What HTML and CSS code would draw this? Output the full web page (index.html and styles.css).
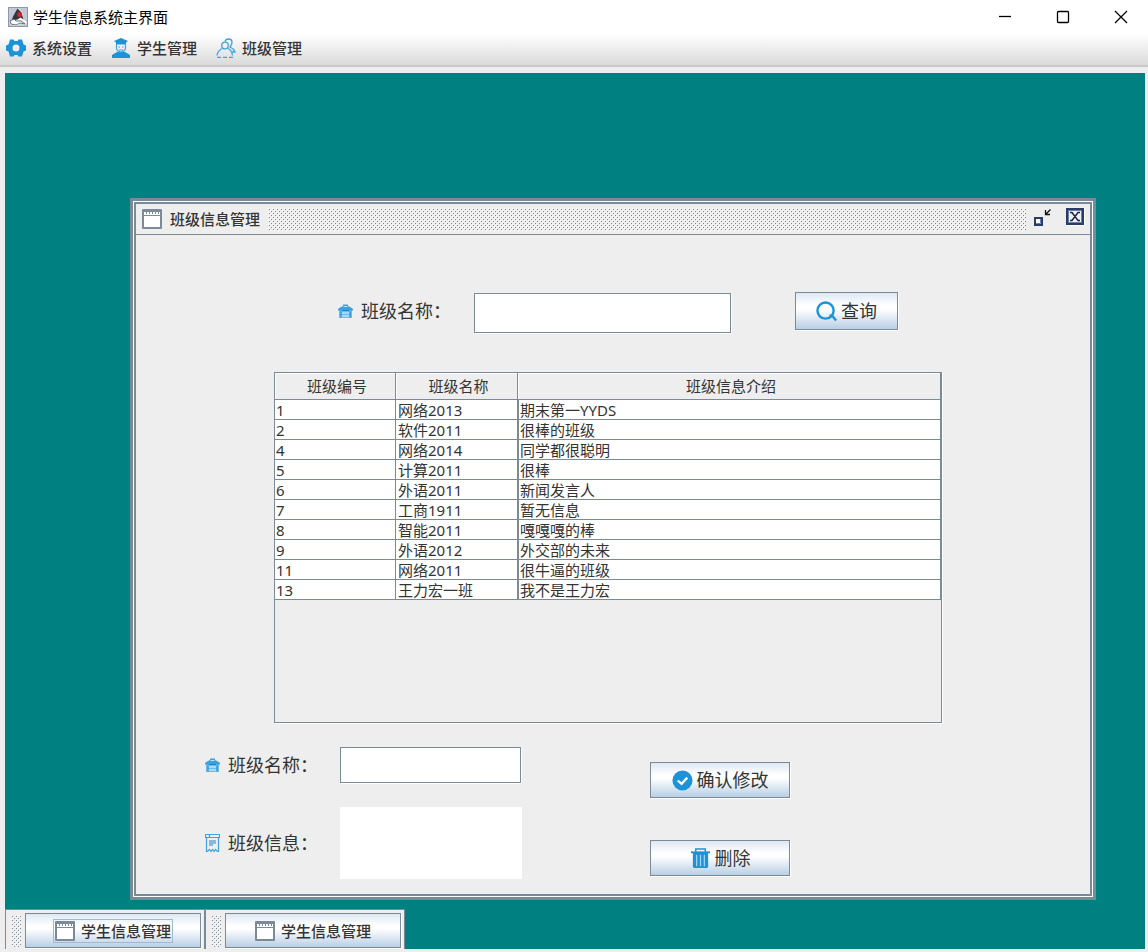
FILE: index.html
```html
<!DOCTYPE html>
<html lang="zh-CN">
<head>
<meta charset="utf-8">
<meta name="viewport" content="width=device-width, initial-scale=1">
<title>学生信息系统主界面</title>
<link rel="stylesheet" href="styles.css">
</head>
<body>
<svg class="sprite" aria-hidden="true">
  <symbol id="i-window" viewBox="0 0 20 20">
    <rect width="20" height="20" rx="1" fill="#7a8a99"/>
    <rect x="2" y="3" width="16" height="3" fill="#fff"/>
    <path d="M4.500 3v2M7.500 3v2M10.500 3v2M13.500 3v2M16.500 3v2" stroke="#7a8a99"/>
    <rect x="2" y="7" width="16" height="11" fill="#fff"/>
  </symbol>
  <symbol id="i-house" viewBox="0 0 15 14">
    <path d="M1 5h13v9H1z" fill="#6bbcec"/>
    <path d="M0 5l2-1.500L5 2V0.500h5V2l3 1.500L15 5v1.500H0z" fill="#3ba0dc"/>
    <path d="M3.500 9h8M3.500 12h8" stroke="#e6f4fc"/>
    <path d="M4 6.500h7M3 7.500v6M12 7.500v6" stroke="#1f86c9"/>
    <path d="M5.500 2.500h4" stroke="#bfe1f6"/>
  </symbol>
</svg>

<header class="titlebar">
  <svg class="app-icon" viewBox="0 0 20 20" aria-hidden="true">
    <rect x=".5" y=".5" width="19" height="19" fill="#c2c9d4" stroke="#8d99aa"/>
    <path d="M10 1l4 4 1.500 7 3.500 3-2 3-4-1-5 2-5-1-2-3 4-2 1-4z" fill="#f5f5f5"/>
    <path d="M9.500 1.500l4 4 2 7-3-2-3 2-6 1 2-5z" fill="#34363d"/>
    <path d="M2 14l4-2 2 2h5l4 3-5-1-4 2-5-1z" fill="#fff" stroke="#4b4f59" stroke-width=".8"/>
    <circle cx="11.500" cy="7.500" r="2.500" fill="#d0242c"/>
  </svg>
  <h1 class="app-title">学生信息系统主界面</h1>
  <div class="window-controls">
    <button type="button" aria-label="最小化"><svg viewBox="0 0 14 14"><path d="M1 6.500h12"/></svg></button>
    <button type="button" aria-label="最大化"><svg viewBox="0 0 14 14"><rect x="1.500" y="1.500" width="11" height="11" rx="1"/></svg></button>
    <button type="button" aria-label="关闭"><svg viewBox="0 0 14 14"><path d="M1 1l12 12M13 1L1 13"/></svg></button>
  </div>
</header>

<nav class="menubar">
  <button type="button" class="menu">
    <svg viewBox="0 0 20 20" aria-hidden="true"><path fill="#1a93d9" fill-rule="evenodd" d="M4 1.500h3.500L8.500 3h3l1-1.500H16l1.500 5L20 7.500v5l-2.500 1-1.500 5h-3.500l-1-1.500h-3l-1 1.500H4l-1.500-5-2.500-1v-5l2.500-1zM10 6.500a3.500 3.500 0 1 0 0 7 3.500 3.500 0 0 0 0-7z"/></svg>
    系统设置
  </button>
  <button type="button" class="menu">
    <svg viewBox="0 0 20 20" aria-hidden="true">
      <path fill="#1a93d9" d="M3 3l7-3 7 3-2 1.500v2H5v-2zM1 20v-3l5-3h8l5 3v3z"/>
      <path fill="none" stroke="#3ba4e2" stroke-width="1.200" d="M5.500 6v4c0 2 2 4 4.500 4s4.500-2 4.500-4V6M7.500 9h1.500M11 9h1.500M8 12h4"/>
    </svg>
    学生管理
  </button>
  <button type="button" class="menu">
    <svg viewBox="0 0 20 20" aria-hidden="true" fill="none" stroke="#3ba4e2" stroke-width="1.300">
      <path d="M9 3.500C9.500 1.500 10.500 1 12.500 1 15 1 16 2.500 16 4.500s-1 3-2 4.500c2.500 1 4 2.500 5 5h-3"/>
      <circle cx="9" cy="7.500" r="3.300"/>
      <path d="M6.500 10.500C3 12 1.500 14 1 17.500M12 10.500c2.500 1 4 3.500 4.500 7"/>
      <path d="M1 19.300h16" stroke-dasharray="4 2"/>
    </svg>
    班级管理
  </button>
</nav>

<main class="desktop">
  <section class="frame" aria-labelledby="frame-title">
    <div class="frame-inner">
      <header class="frame-bar">
        <svg class="window-icon" aria-hidden="true"><use href="#i-window"/></svg>
        <h2 id="frame-title" class="frame-title">班级信息管理</h2>
        <span class="bumps frame-grip"></span>
        <button type="button" class="frame-button" aria-label="图标化">
          <svg viewBox="0 0 20 20"><rect x="2" y="12" width="7" height="7" fill="#fff" stroke="#2b3b68" stroke-width="2"/><path d="M3 17.500h4.500V13" fill="none" stroke="#6b80b0"/><path d="M17.500 3.500l-5 5M12.500 4v4.500h4.500" fill="none" stroke="#111" stroke-width="1.300"/></svg>
        </button>
        <button type="button" class="frame-button" aria-label="关闭窗口">
          <svg viewBox="0 0 20 20"><path d="M1 19.500h18.500V2" fill="none" stroke="#fff"/><rect x="2" y="3" width="16" height="15" fill="#eef1f7" stroke="#2b3b68" stroke-width="2"/><rect x="3.500" y="4.500" width="13" height="12" fill="none" stroke="#6b80b0"/><path d="M5 6.500h2l6 8h2M15 6.500h-2l-6 8H5" fill="none" stroke="#1d2440" stroke-width="1.500"/></svg>
        </button>
      </header>

      <div class="frame-body">
        <form class="search">
          <label class="label search-label" for="q"><svg class="label-icon" aria-hidden="true"><use href="#i-house"/></svg>班级名称：</label>
          <input class="field search-field" id="q" type="text">
          <button type="button" class="button button-search">
            <svg viewBox="0 0 22 22" aria-hidden="true" fill="none" stroke="#1a93d9" stroke-width="2.500"><circle cx="10" cy="10" r="8.500"/><path d="M14 15.500h3l4 5"/></svg>
            查询
          </button>
        </form>

        <div class="table-pane">
          <table class="table">
            <colgroup><col class="col-id"><col class="col-name"><col></colgroup>
            <thead><tr><th scope="col">班级编号</th><th scope="col">班级名称</th><th scope="col">班级信息介绍</th></tr></thead>
            <tbody>
              <tr><td>1</td><td>网络2013</td><td>期末第一YYDS</td></tr>
              <tr><td>2</td><td>软件2011</td><td>很棒的班级</td></tr>
              <tr><td>4</td><td>网络2014</td><td>同学都很聪明</td></tr>
              <tr><td>5</td><td>计算2011</td><td>很棒</td></tr>
              <tr><td>6</td><td>外语2011</td><td>新闻发言人</td></tr>
              <tr><td>7</td><td>工商1911</td><td>暂无信息</td></tr>
              <tr><td>8</td><td>智能2011</td><td>嘎嘎嘎的棒</td></tr>
              <tr><td>9</td><td>外语2012</td><td>外交部的未来</td></tr>
              <tr><td>11</td><td>网络2011</td><td>很牛逼的班级</td></tr>
              <tr><td>13</td><td>王力宏一班</td><td>我不是王力宏</td></tr>
            </tbody>
          </table>
        </div>

        <form class="edit">
          <div class="edit-fields">
            <label class="label" for="name"><svg class="label-icon" aria-hidden="true"><use href="#i-house"/></svg>班级名称：</label>
            <input class="field edit-name" id="name" type="text">
            <label class="label" for="info">
              <svg class="label-icon label-icon-tall" viewBox="0 0 15 19" aria-hidden="true" fill="none" stroke="#3ba4e2" stroke-width="1.200"><path d="M.5.500h14v3H.5zM1.500 3.500v14h1l2-2 1.500 2 1.500-2 1.500 2 1.500-2 2 2h1v-14M4.500.500v3"/><path d="M4 7h7M4 9h7M4 11h4" stroke="#1a86cc"/></svg>班级信息：</label>
            <textarea class="edit-info" id="info"></textarea>
          </div>
          <div class="edit-actions">
            <button type="button" class="button">
              <svg viewBox="0 0 22 22" aria-hidden="true"><circle cx="11" cy="11" r="10.500" fill="#1a93d9"/><path d="M6 11l4 3.500 6-6.500" fill="none" stroke="#fff" stroke-width="2.400"/></svg>
              确认修改
            </button>
            <button type="button" class="button">
              <svg viewBox="0 0 22 22" aria-hidden="true"><path d="M6 4V1h10v3" fill="none" stroke="#1a93d9" stroke-width="1.500"/><path d="M1 4.500h20" stroke="#1a93d9" stroke-width="2"/><path d="M3 5h16v14.500a1.500 1.500 0 0 1-1.500 1.500h-13A1.500 1.500 0 0 1 3 19.500z" fill="#1a93d9"/><path d="M7 7v12M11 7v12M15 7v12" stroke="#a5d6f3" stroke-width="1.300"/></svg>
              删除
            </button>
          </div>
        </form>
      </div>
    </div>
  </section>

  <div class="dock">
    <div class="dock-item">
      <span class="bumps dock-grip"></span>
      <button type="button" class="button dock-button"><span class="dock-label dock-label-focus"><svg class="window-icon" aria-hidden="true"><use href="#i-window"/></svg>学生信息管理</span></button>
    </div>
    <div class="dock-item">
      <span class="bumps dock-grip"></span>
      <button type="button" class="button dock-button"><span class="dock-label"><svg class="window-icon" aria-hidden="true"><use href="#i-window"/></svg>学生信息管理</span></button>
    </div>
  </div>
</main>
</body>
</html>
```
FILE: styles.css
```css
:root {
  --steel: #7a8a99;
  --face: #eeeeee;
  --ink: #333333;
  --teal: #008080;
}

* {
  box-sizing: border-box;
}

body {
  margin: 0;
  min-height: 100vh;
  display: flex;
  flex-direction: column;
  background: var(--face);
  color: var(--ink);
  font: 15px/20px "Noto Sans", "Noto Sans CJK SC", sans-serif;
}

button,
input,
textarea {
  font: inherit;
  color: inherit;
  border-radius: 0;
}

.sprite {
  display: none;
}

.titlebar {
  display: flex;
  align-items: center;
  height: 34px;
  padding-left: 8px;
  background: #fff;
  color: #000;
}

.app-icon {
  width: 20px;
  height: 20px;
  margin-right: 5px;
}

.app-title {
  margin: 0;
  font-size: 15px;
  font-weight: 400;
}

.window-controls {
  display: flex;
  margin-left: auto;
}

.window-controls button {
  width: 58px;
  height: 34px;
  padding: 0 0 0 4px;
  border: 0;
  background: none;
}

.window-controls svg {
  display: block;
  width: 14px;
  height: 14px;
  margin: 0 auto;
  fill: none;
  stroke: #000;
  stroke-width: 1.3;
}

.menubar {
  display: flex;
  gap: 19px;
  height: 33px;
  padding: 0 0 3px 6px;
  background: linear-gradient(#fff, #dadada);
  border-bottom: 2px solid #c8c8c8;
}

.menu {
  display: flex;
  align-items: center;
  gap: 6px;
  padding: 0;
  border: 0;
  background: none;
  font-weight: 500;
}

.menu svg {
  width: 20px;
  height: 20px;
}

.desktop {
  position: relative;
  flex: 1;
  min-height: 640px;
  margin: 6px 3px 3px 5px;
  background: var(--teal);
}

.frame {
  position: absolute;
  inset: 125px 49px 49px 125px;
  display: flex;
  padding: 1px;
  border: 3px solid var(--steel);
  background: #fff;
}

.frame-inner {
  flex: 1;
  display: flex;
  flex-direction: column;
  border: 2px solid var(--steel);
  background: var(--face);
}

.frame-bar {
  display: flex;
  align-items: center;
  height: 31px;
  padding: 0 5px 0 6px;
  border-bottom: 1px solid var(--steel);
}

.window-icon {
  width: 20px;
  height: 20px;
}

.frame-title {
  margin: 0 8px;
  font-size: 15px;
  font-weight: 500;
}

.bumps {
  background-image:
    conic-gradient(at 1px 1px, transparent 75%, #7a8a99 0),
    conic-gradient(at 1px 1px, transparent 75%, #7a8a99 0),
    conic-gradient(at 1px 1px, transparent 75%, #fff 0),
    conic-gradient(at 1px 1px, transparent 75%, #fff 0);
  background-size: 4px 4px;
  background-position: 1px 1px, 3px 3px, 0 0, 2px 2px;
}

.frame-grip {
  flex: 1;
  height: 23px;
  margin-right: 7px;
}

.frame-button {
  width: 20px;
  height: 26px;
  margin-left: 12px;
  padding: 0 0 6px;
  border: 0;
  background: none;
}

.frame-grip + .frame-button {
  margin-left: 0;
}

.frame-button svg {
  display: block;
  width: 20px;
  height: 20px;
}

.frame-body {
  flex: 1;
  display: flex;
  flex-direction: column;
  padding: 57px 148px 15px 69px;
}

.label {
  display: flex;
  align-items: center;
  gap: 8px;
  font-size: 18px;
  white-space: nowrap;
}

.label-icon {
  flex: none;
  width: 15px;
  height: 14px;
}

.label-icon-tall {
  height: 19px;
}

.field {
  padding: 0 4px;
  border: 1px solid var(--steel);
  background: #fff;
  box-shadow: 1px 1px 0 #fff;
}

.button {
  display: flex;
  align-items: center;
  justify-content: center;
  gap: 4px;
  height: 36px;
  padding: 0;
  border: 1px solid var(--steel);
  background: linear-gradient(#dde8f3, #fff 35%, #fff 45%, #b8cfe5);
  box-shadow: 1px 1px 0 #fff;
  font-size: 18px;
}

.button svg {
  width: 21px;
  height: 21px;
}

.search {
  display: flex;
  align-items: flex-start;
  padding-left: 133px;
}

.search-label {
  width: 136px;
  height: 38px;
}

.search-field {
  width: 257px;
  height: 40px;
  margin-top: 1px;
}

.button-search {
  width: 103px;
  height: 38px;
  margin-left: 64px;
}

.table-pane {
  flex: 1;
  margin: 39px 0 24px 69px;
  border: 1px solid var(--steel);
  overflow: hidden;
  box-shadow: 1px 1px 0 #fff;
}

.table {
  width: 100%;
  table-layout: fixed;
  border-collapse: separate;
  border-spacing: 0;
}

.col-id {
  width: 121px;
}

.col-name {
  width: 122px;
}

.table th,
.table td {
  padding: 0 1px;
  border-right: 1px solid var(--steel);
  border-bottom: 1px solid var(--steel);
  white-space: nowrap;
}

.table th {
  height: 27px;
  padding-left: 5px;
  font-weight: 400;
  box-shadow: inset 1px 1px 0 #fff;
}

.table td {
  height: 20px;
  padding-top: 2px;
  line-height: 17px;
  background: #fff;
}

.table td + td {
  padding-left: 2px;
}

.table td:last-child {
  padding-left: 1px;
  border-left: 1px solid var(--steel);
}

.edit {
  display: flex;
  gap: 128px;
}

.edit-fields {
  display: grid;
  grid-template-columns: 135px 182px;
  grid-template-rows: 36px 72px;
  row-gap: 24px;
}

.edit-name {
  width: 181px;
}

.edit-info {
  padding: 4px;
  border: 0;
  background: #fff;
  resize: none;
}

.edit-actions {
  display: grid;
  align-content: start;
  gap: 42px;
  width: 140px;
  padding-top: 15px;
}

.dock {
  position: absolute;
  left: 0;
  bottom: 0;
  display: flex;
}

.dock-item {
  display: flex;
  gap: 4px;
  width: 200px;
  height: 40px;
  padding: 3px 3px 2px 5px;
  border: 1px solid var(--steel);
  border-bottom: 0;
  background: var(--face);
}

.dock-grip {
  width: 10px;
  margin-top: 2px;
}

.dock-button {
  flex: 1;
  height: 35px;
  font-size: 15px;
  font-weight: 500;
}

.dock-label {
  display: flex;
  align-items: center;
  gap: 6px;
  padding: 1px;
  border: 1px solid transparent;
}

.dock-label-focus {
  border-color: #a3b8cc;
}

.dock-label svg {
  width: 20px;
  height: 20px;
}
```
